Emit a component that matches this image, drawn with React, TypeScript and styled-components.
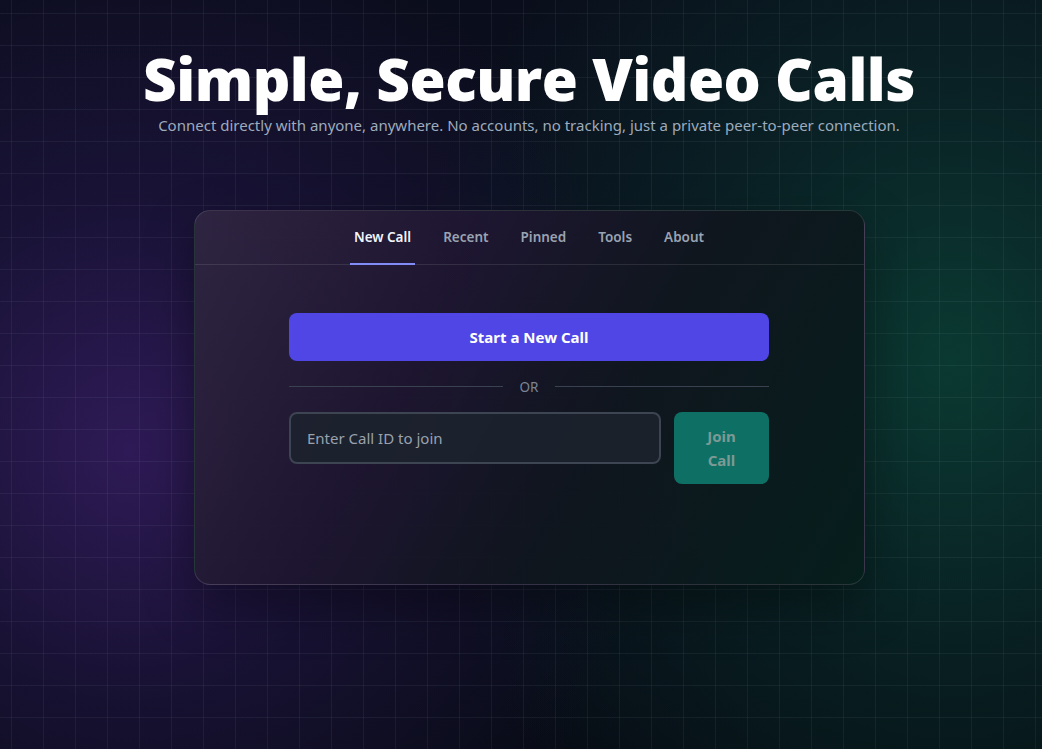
import React, { useState } from 'react'
import styled, { createGlobalStyle } from 'styled-components'

const GlobalStyle = createGlobalStyle`
  html, body {
    margin: 0;
    padding: 0;
    background: #090d18;
  }
  * {
    box-sizing: border-box;
  }
`

const Page = styled.div`
  min-height: 749px;
  display: flex;
  flex-direction: column;
  align-items: center;
  padding-top: 49px;
  padding-left: 16px;
  font-family: 'Noto Sans', 'Open Sans', sans-serif;
  color: #fff;
  background-color: #090d18;
  background-image:
    linear-gradient(to right, rgba(148, 163, 184, 0.085) 1px, transparent 1px),
    linear-gradient(to bottom, rgba(148, 163, 184, 0.085) 1px, transparent 1px),
    radial-gradient(ellipse 520px 560px at 130px 450px, rgba(58, 30, 105, 0.75) 0, rgba(45, 25, 90, 0.4) 45%, transparent 100%),
    radial-gradient(ellipse 540px 620px at 950px 360px, rgba(10, 68, 54, 0.8) 0, rgba(8, 56, 46, 0.45) 45%, transparent 100%),
    linear-gradient(to bottom, #0a0d1b 0%, #0c0f20 50%, #070b14 100%);
  background-size: 32px 32px, 32px 32px, 100% 100%, 100% 100%, 100% 100%;
  background-position: 11px 13px, 11px 13px, 0 0, 0 0, 0 0;
`

const Title = styled.h1`
  margin: 0;
  font-family: 'Open Sans', 'Noto Sans', sans-serif;
  font-weight: 800;
  font-size: 58.5px;
  line-height: 1;
  letter-spacing: -0.5px;
  color: #ffffff;
`

const Subtitle = styled.p`
  margin: 6px 0 0;
  font-size: 15px;
  line-height: 22px;
  color: #9dabbd;
`

const Card = styled.section`
  margin-top: 74px;
  width: 671px;
  min-height: 375px;
  border-radius: 16px;
  border: 1px solid rgba(255, 255, 255, 0.12);
  background: linear-gradient(
    120deg,
    rgba(48, 38, 66, 0.95) 0%,
    rgba(30, 22, 48, 0.95) 35%,
    rgba(16, 22, 30, 0.97) 60%,
    rgba(6, 30, 28, 0.97) 100%
  );
  box-shadow: 0 20px 50px rgba(0, 0, 0, 0.35);
  overflow: hidden;
`

const TabBar = styled.nav`
  display: flex;
  justify-content: center;
  gap: 24px;
  height: 54px;
  border-bottom: 1px solid rgba(255, 255, 255, 0.1);
`

const Tab = styled.button<{ $active?: boolean }>`
  all: unset;
  cursor: pointer;
  display: flex;
  align-items: center;
  padding: 0 4px;
  font-family: 'Noto Sans', sans-serif;
  font-size: 13.5px;
  font-weight: 600;
  color: ${p => (p.$active ? '#f1f5f9' : '#9aa3b2')};
  border-bottom: 2px solid ${p => (p.$active ? '#818cf8' : 'transparent')};
  margin-bottom: -1px;
`

const Body = styled.div`
  width: 480px;
  margin: 0 auto;
  padding: 48px 0 60px;
  display: flex;
  flex-direction: column;
`

const PrimaryButton = styled.button`
  all: unset;
  cursor: pointer;
  height: 48px;
  border-radius: 8px;
  background: #4f46e5;
  color: #ffffff;
  font-family: 'Noto Sans', sans-serif;
  font-size: 15px;
  font-weight: 700;
  text-align: center;
  line-height: 48px;
`

const Divider = styled.div`
  display: flex;
  align-items: center;
  gap: 17px;
  margin: 17px 0 16px;
  font-size: 13.5px;
  color: #7b8494;

  &::before,
  &::after {
    content: '';
    flex: 1;
    height: 1px;
    background: #3a4150;
  }
`

const JoinRow = styled.div`
  display: flex;
  align-items: flex-start;
  gap: 13px;
`

const CallInput = styled.input`
  flex: 1;
  min-width: 0;
  height: 52px;
  padding: 0 16px;
  border-radius: 8px;
  border: 2px solid #3d4452;
  background: rgba(28, 35, 46, 0.85);
  color: #e5e7eb;
  font-family: 'Noto Sans', sans-serif;
  font-size: 15px;
  outline: none;

  &::placeholder {
    color: #9aa1ad;
  }
`

const JoinButton = styled.button`
  all: unset;
  flex: 0 0 95px;
  height: 72px;
  border-radius: 8px;
  background: #0e7064;
  color: #7c9a95;
  font-family: 'Noto Sans', sans-serif;
  font-size: 15px;
  font-weight: 700;
  line-height: 24px;
  text-align: center;
  display: flex;
  align-items: center;
  justify-content: center;
  cursor: not-allowed;
`

const tabs = ['New Call', 'Recent', 'Pinned', 'Tools', 'About']

export default function App() {
  const [active, setActive] = useState('New Call')
  const [callId, setCallId] = useState('')
  return (
    <>
      <GlobalStyle />
      <Page>
        <Title>Simple, Secure Video Calls</Title>
        <Subtitle>
          Connect directly with anyone, anywhere. No accounts, no tracking, just a private peer-to-peer connection.
        </Subtitle>
        <Card>
          <TabBar>
            {tabs.map(t => (
              <Tab key={t} $active={t === active} onClick={() => setActive(t)}>
                {t}
              </Tab>
            ))}
          </TabBar>
          <Body>
            <PrimaryButton>Start a New Call</PrimaryButton>
            <Divider>OR</Divider>
            <JoinRow>
              <CallInput
                placeholder='Enter Call ID to join'
                value={callId}
                onChange={e => setCallId(e.target.value)}
              />
              <JoinButton disabled={!callId}>
                Join
                <br />
                Call
              </JoinButton>
            </JoinRow>
          </Body>
        </Card>
      </Page>
    </>
  )
}
